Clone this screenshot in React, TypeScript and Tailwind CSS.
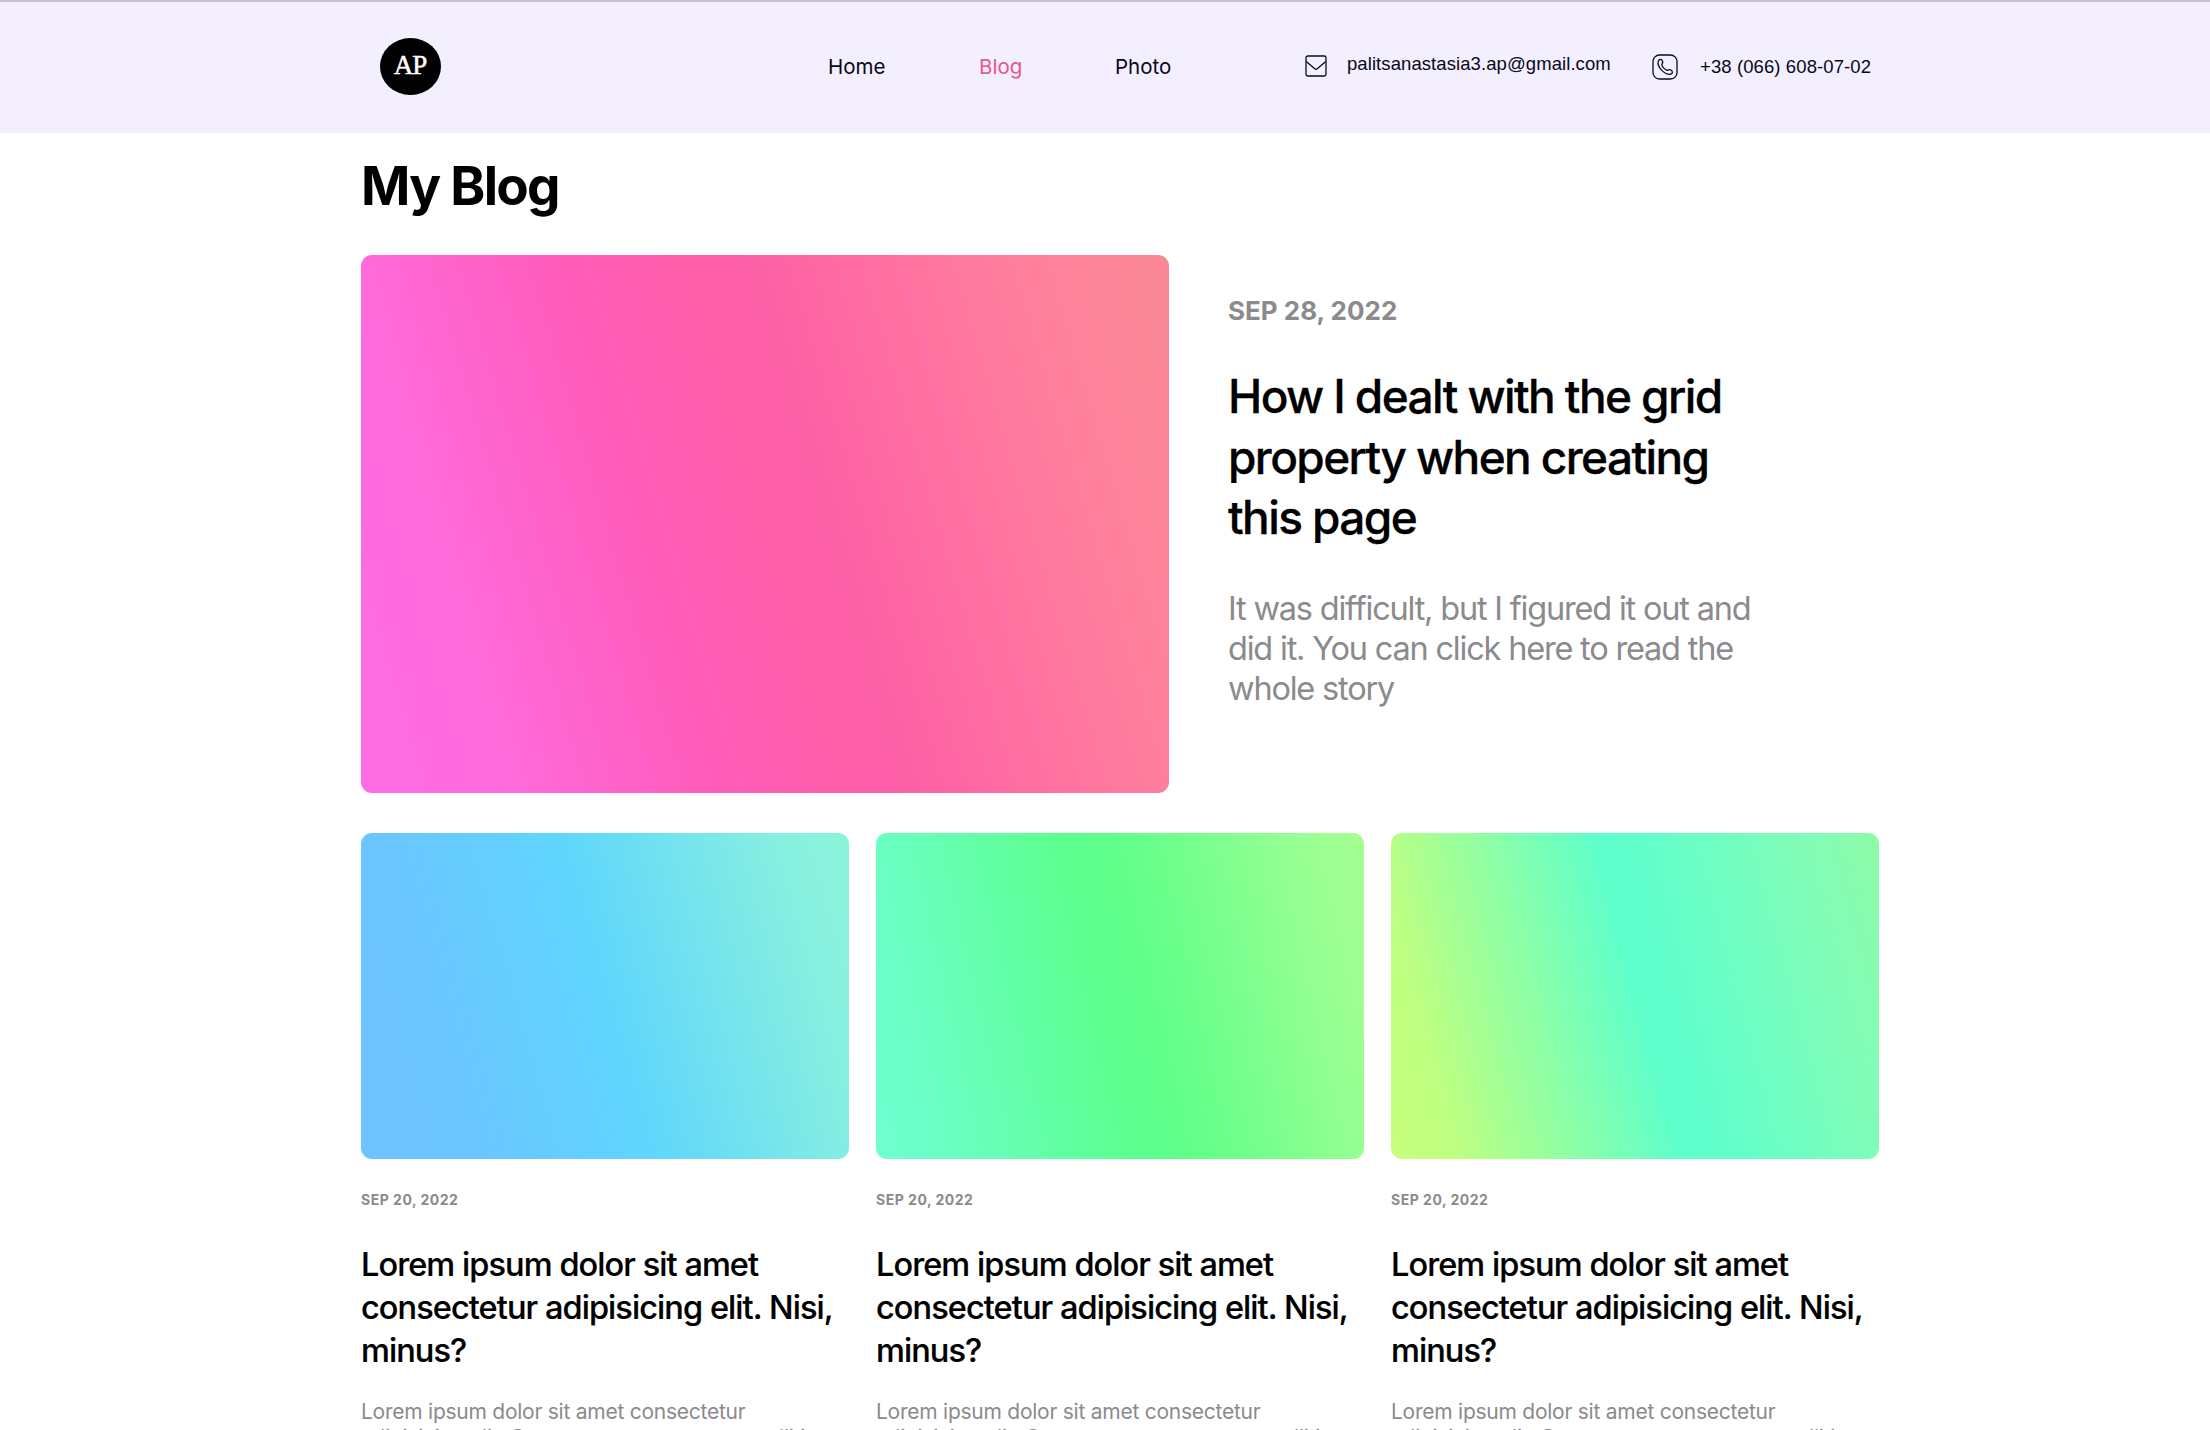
const cards = [
  { id: 1, fill: "bg-[linear-gradient(74deg,#6fc2ff_0%,#6bc5fe_18%,#60d4ff_48%,#62d8fa_53%,#87efe0_87%,#8bf4da_100%)]" },
  { id: 2, fill: "bg-[linear-gradient(77deg,#6effcf_0%,#6bffc6_12%,#5cff8c_48%,#62ff8a_57%,#9dff93_91%,#a4ff92_100%)]" },
  { id: 3, fill: "bg-[linear-gradient(75deg,#c6ff7b_0%,#bfff80_11%,#8dffa6_32%,#5effcc_51%,#62ffcb_59%,#82fcb6_87%,#8cfba6_100%)]" },
];

function MailIcon() {
  return (
    <svg className="mb-[2px] block h-[22px] w-[22px] shrink-0" viewBox="0 0 22 22" fill="none" stroke="#0b0a1c" strokeWidth="1.3">
      <rect x="1" y="1" width="20" height="20" rx="1.8" />
      <path d="M1.2 6.6 L9.8 13.8 Q11 14.8 12.2 13.8 L20.8 6.6" />
    </svg>
  );
}

function PhoneIcon() {
  return (
    <svg className="block h-[26px] w-[26px] shrink-0" viewBox="0 0 26 26" fill="none" stroke="#0b0a1c" strokeWidth="1.3">
      <rect x="1" y="1" width="24" height="24" rx="6.5" />
      <path d="M6.2 7.6 C6.6 5.8 8.6 4.7 9.7 5.9 C10.9 7.3 11.1 8.6 10.1 9.9 C9.3 11 9.9 12 11.6 13.9 C13.4 15.8 14.8 16.7 16 16.1 C17.6 15.3 19.2 15.9 20.1 17.2 C20.9 18.6 19.6 20.4 17.6 20.4 C14.6 20.4 11.6 18.3 9.4 15.9 C7 13.2 5.5 10.3 6.2 7.6 Z" />
    </svg>
  );
}

export default function App() {
  return (
    <div className="h-[1430px] w-[2210px] overflow-hidden bg-white font-['Inter',sans-serif] text-black">
      <header className="h-[133px] border-t-2 border-[#c6c1d9] bg-[#f3effe]">
        <div className="flex h-[129px] items-center pl-[380px] whitespace-nowrap">
          <div className="flex h-[57px] w-[61px] items-center justify-center rounded-[50%] bg-black pr-[1px] pb-[3px] font-['Liberation_Serif',serif] text-[27px] leading-none tracking-[-1px] text-white [-webkit-text-stroke:0.5px_white]">
            AP
          </div>
          <nav className="flex shrink-0 items-center pt-px pl-[387px] text-[20.5px] text-[#08081a]">
            <a className="w-[151px]">Home</a>
            <a className="w-[136px] text-[#ec5490]">Blog</a>
            <a className="w-[190px]">Photo</a>
          </nav>
          <div className="flex shrink-0 items-center font-['Liberation_Sans',sans-serif] text-[18.5px] text-[#08081a]">
            <MailIcon />
            <span className="w-[325px] shrink-0 pb-[5px] pl-5 tracking-[0.08px]">palitsanastasia3.ap@gmail.com</span>
            <PhoneIcon />
            <span className="pl-[22px] tracking-[0.1px]">+38 (066) 608-07-02</span>
          </div>
        </div>
      </header>

      <main className="ml-[361px] w-[1518px]">
        <h1 className="h-[122px] pt-[20px] text-[53px] leading-[66px] font-bold tracking-[-1.7px]">My Blog</h1>

        <section className="flex h-[538px]">
          <div className="w-[808px] rounded-[11px] bg-[linear-gradient(73.5deg,#ff6be2_0%,#ff6bdd_14%,#ff5cba_37%,#fc5fa6_52%,#fc5fa6_56%,#ff6ba2_66%,#ff829c_87%,#f98994_100%)]" />
          <div className="pt-[38px] pl-[59px] whitespace-nowrap">
            <p className="text-[26px] leading-[36px] font-bold text-[#8b8a8c]">SEP 28, 2022</p>
            <h2 className="mt-[37px] text-[46px] leading-[60.5px] font-medium tracking-[-1.6px] [-webkit-text-stroke:0.3px_black]">
              How I dealt with the grid<br />property when creating<br />this page
            </h2>
            <p className="mt-[41px] text-[32.5px] leading-[40px] tracking-[-1.2px] text-[#8b8a8c]">
              It was difficult, but I figured it out and<br />did it. You can click here to read the<br />whole story
            </p>
          </div>
        </section>

        <section className="mt-[40px] grid grid-cols-3 gap-[27px] whitespace-nowrap">
          {cards.map((card) => (
            <article key={card.id}>
              <div className={`h-[326px] rounded-[11px] ${card.fill}`} />
              <p className="mt-[31px] text-[14px] leading-[20px] font-bold tracking-[0.5px] text-[#8b8a8c]">SEP 20, 2022</p>
              <h3 className="mt-[33px] text-[32.5px] leading-[43px] font-medium tracking-[-0.92px] [-webkit-text-stroke:0.2px_black]">
                Lorem ipsum dolor sit amet<br />consectetur adipisicing elit. Nisi,<br />minus?
              </h3>
              <p className="mt-[27px] text-[21px] leading-[25.5px] tracking-[-0.25px] text-[#8b8a8c]">
                Lorem ipsum dolor sit amet consectetur<br />adipisicing elit. Quas numquam rerum a mollitia
              </p>
            </article>
          ))}
        </section>
      </main>
    </div>
  );
}
